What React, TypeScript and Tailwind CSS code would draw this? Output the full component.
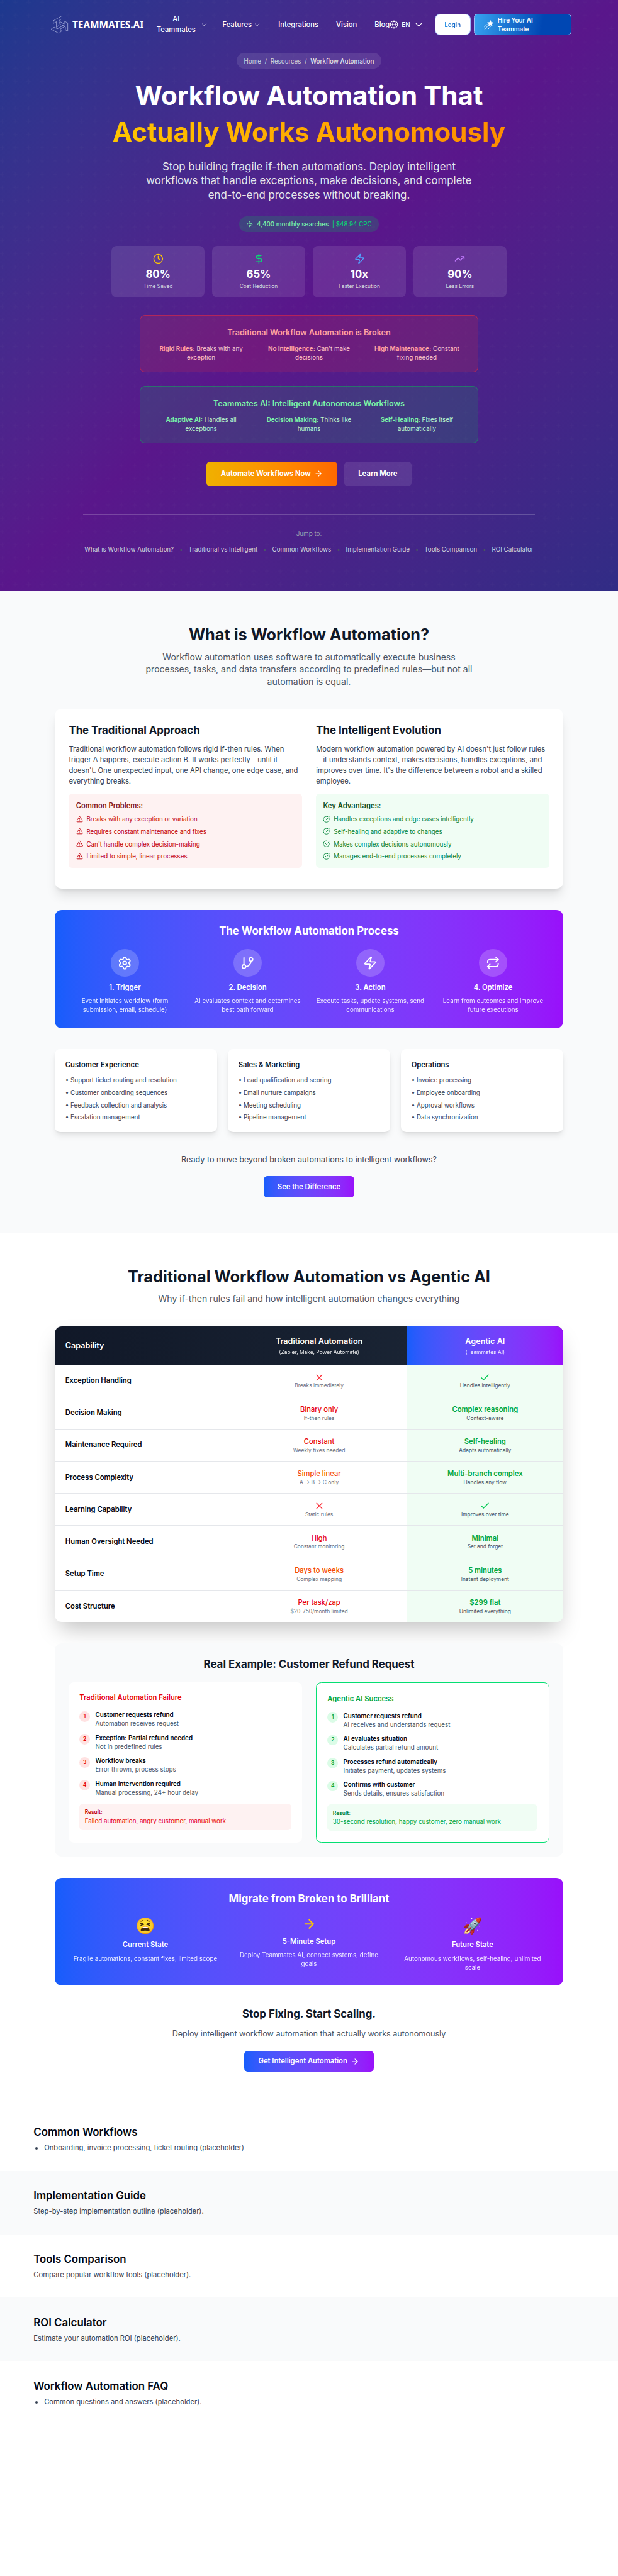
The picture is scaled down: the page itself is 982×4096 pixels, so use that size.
import { Fragment, type ReactNode } from "react";
import {
  AlertTriangle,
  ArrowRight,
  Check,
  ChevronDown,
  CircleCheckBig,
  Clock,
  DollarSign,
  GitBranch,
  Globe,
  Repeat,
  Settings,
  TrendingUp,
  X,
  Zap,
} from "lucide-react";

function LogoMark() {
  return (
    <svg width="40" height="42" viewBox="19 21 120 126" fill="none" stroke="#b4bbe4" strokeWidth="3.2" strokeLinejoin="round">
      <path d="M35 55 90 24Q94 23 94 28V42L73 54V86L56 100V62L38 72Q35 73 35 69Z" />
      <path d="M78 64Q78 60 82 62L109 78V62Q110 58 114 60L133 70V126L117 117V98L80 78Z" />
      <path d="M22 110 40 100Q43 99 46 101L62 110 104 86Q110 86 112 94L82 112 89 124Q90 128 86 131L72 141 22 114Z" />
    </svg>
  );
}

function ShootingStar() {
  return (
    <svg width="22" height="22" viewBox="0 0 22 22" fill="none" stroke="#fff" strokeWidth="1.300" strokeLinecap="round">
      <path fill="#fff" strokeWidth="0.800" strokeLinejoin="round" d="M14.500 .8l2 4.300 4.700.5-3.500 3.200 1 4.700-4.200-2.400-4.200 2.400 1-4.700L7.800 5.600l4.700-.5z" />
      <path d="M7 9.500.8 15.700M8 14l-6 6.500M14.500 15l-5 5.500" />
    </svg>
  );
}

function PlusPattern() {
  return (
    <svg className="absolute inset-0 h-full w-full opacity-10">
      <defs>
        <pattern id="plus" width="60" height="60" patternUnits="userSpaceOnUse">
          <path
            fill="#9C92AC"
            fillOpacity="0.4"
            d="M36 34v-4h-2v4h-4v2h4v4h2v-4h4v-2h-4zm0-30V0h-2v4h-4v2h4v4h2V6h4V4h-4zM6 34v-4H4v4H0v2h4v4h2v-4h4v-2H6zM6 4V0H4v4H0v2h4v4h2V6h4V4H6z"
          />
        </pattern>
      </defs>
      <rect width="100%" height="100%" fill="url(#plus)" />
    </svg>
  );
}

function Header() {
  return (
    <header className="flex h-[112px] items-center pl-[116px] font-medium">
      <LogoMark />
      <span className="ml-2 w-[184px] font-['Noto_Sans',sans-serif] text-[22px] font-bold tracking-[-0.1px]">TEAMMATES.AI</span>
      <nav className="flex w-[559px] items-center text-base whitespace-nowrap">
        <span className="ml-[4px] flex w-[119px] items-center">
          <span className="w-[94px] text-center leading-6">
            AI
            <br />
            Teammates
          </span>
          <ChevronDown size={16} className="ml-[9px]" />
        </span>
        <span className="ml-[33px] flex items-center gap-1">
          Features <ChevronDown size={16} />
        </span>
        <span className="ml-10">Integrations</span>
        <span className="ml-10">Vision</span>
        <span className="ml-10">Blog</span>
      </nav>
      <div className="ml-[-25px] flex items-center">
        <Globe size={20} strokeWidth={1.8} />
        <span className="ml-2 text-sm">EN</span>
        <ChevronDown size={24} strokeWidth={1.6} className="ml-2" />
      </div>
      <div className="ml-6 flex items-center gap-2">
        <span className="flex h-12 w-[81px] items-center justify-center rounded-xl border-2 border-[#9dc0fb] bg-white text-sm">
          <span className="bg-gradient-to-r from-[#2f95e6] to-[#0047b3] bg-clip-text text-transparent">Login</span>
        </span>
        <span className="flex h-12 w-[221px] items-center gap-[9px] rounded-lg border-2 border-[#9dc0fb] bg-[linear-gradient(100deg,#37a3f1_0%,#0047b3_70%)] pl-[21px] text-sm leading-5 font-semibold">
          <ShootingStar />
          <span className="w-24">Hire Your AI Teammate</span>
        </span>
      </div>
    </header>
  );
}

const stats = [
  { icon: <Clock size={24} className="text-yellow-400" />, value: "80%", label: "Time Saved" },
  { icon: <DollarSign size={24} className="text-green-400" />, value: "65%", label: "Cost Reduction" },
  { icon: <Zap size={24} className="text-blue-400" />, value: "10x", label: "Faster Execution" },
  { icon: <TrendingUp size={24} className="text-purple-400" />, value: "90%", label: "Less Errors" },
];

const jumpLinks = [
  "What is Workflow Automation?",
  "Traditional vs Intelligent",
  "Common Workflows",
  "Implementation Guide",
  "Tools Comparison",
  "ROI Calculator",
];

function Callout({ tone, title, items }: { tone: "red" | "green"; title: string; items: [string, string][] }) {
  const red = tone === "red";
  return (
    <div className={`mx-auto h-[130px] w-[768px] rounded-xl border p-6 text-center ${red ? "border-red-500/50 bg-red-500/15" : "border-green-500/40 bg-green-500/15"}`}>
      <h3 className={`mb-3 text-lg font-semibold ${red ? "text-red-300" : "text-green-300"}`}>{title}</h3>
      <div className={`grid grid-cols-3 gap-4 text-sm ${red ? "text-red-200" : "text-green-200"}`}>
        {items.map(([k, v]) => (
          <div key={k}>
            <strong className={red ? "text-red-300" : "text-green-300"}>{k}</strong> {v}
          </div>
        ))}
      </div>
    </div>
  );
}

function Hero() {
  return (
    <section className="relative h-[1339px] bg-gradient-to-br from-blue-900 via-purple-900 to-indigo-900 text-white">
      <PlusPattern />
      <div className="relative">
        <Header />
        <div className="flex flex-col items-center pt-2">
          <div className="flex h-9 items-center gap-2 rounded-full bg-white/10 px-4 text-sm text-gray-300">
            <span>Home</span>
            <span>/</span>
            <span>Resources</span>
            <span>/</span>
            <span className="font-medium text-gray-200">Workflow Automation</span>
          </div>
          <h1 className="mt-6 w-[1024px] text-center text-6xl leading-[75px] font-bold">
            Workflow Automation That
            <span className="mt-2 block bg-gradient-to-r from-yellow-400 to-orange-400 bg-clip-text text-transparent">Actually Works Autonomously</span>
          </h1>
          <p className="mt-6 w-[768px] text-center text-2xl text-gray-200">
            Stop building fragile if-then automations. Deploy intelligent workflows that handle exceptions, make decisions, and complete end-to-end processes without breaking.
          </p>
          <div className="mt-8 flex h-9 items-center rounded-full bg-green-500/20 px-4 text-sm">
            <Zap size={16} className="text-green-300" />
            <span className="ml-2 font-medium text-green-300">4,400 monthly searches</span>
            <span className="ml-2 text-green-400">| $48.94 CPC</span>
          </div>
          <div className="mt-8 grid w-[896px] grid-cols-4 gap-4">
            {stats.map((s) => (
              <div key={s.label} className="flex flex-col items-center rounded-xl bg-white/10 p-4">
                {s.icon}
                <div className="mt-2 text-2xl font-bold">{s.value}</div>
                <div className="mt-1 text-xs text-gray-300">{s.label}</div>
              </div>
            ))}
          </div>
          <div className="mt-10 flex flex-col gap-8">
            <Callout
              tone="red"
              title="Traditional Workflow Automation is Broken"
              items={[
                ["Rigid Rules:", "Breaks with any exception"],
                ["No Intelligence:", "Can't make decisions"],
                ["High Maintenance:", "Constant fixing needed"],
              ]}
            />
            <Callout
              tone="green"
              title="Teammates AI: Intelligent Autonomous Workflows"
              items={[
                ["Adaptive AI:", "Handles all exceptions"],
                ["Decision Making:", "Thinks like humans"],
                ["Self-Healing:", "Fixes itself automatically"],
              ]}
            />
          </div>
          <div className="mt-10 flex gap-4 font-bold">
            <span className="flex h-14 w-[296px] items-center justify-center gap-2 rounded-lg bg-gradient-to-r from-yellow-500 to-orange-500 whitespace-nowrap">
              Automate Workflows Now <ArrowRight size={20} />
            </span>
            <span className="flex h-14 w-[152px] items-center justify-center rounded-lg bg-white/10">Learn More</span>
          </div>
          <div className="mt-16 w-[1024px] border-t border-white/20 pt-8 text-center text-sm">
            <p className="mb-4 text-gray-400">Jump to:</p>
            <div className="flex justify-between px-[3.500px] whitespace-nowrap text-gray-300">
              {jumpLinks.map((l, i) => (
                <Fragment key={l}>
                  {i > 0 && <span className="text-gray-600">•</span>}
                  <span>{l}</span>
                </Fragment>
              ))}
            </div>
          </div>
        </div>
      </div>
    </section>
  );
}

function Points({ tone, title, items }: { tone: "red" | "green"; title: string; items: string[] }) {
  const red = tone === "red";
  return (
    <div className={`mt-4 rounded-lg p-4 ${red ? "bg-red-50" : "bg-green-50"}`}>
      <h4 className={`mb-2 font-semibold ${red ? "text-red-900" : "text-green-900"}`}>{title}</h4>
      <ul className={`space-y-2 text-sm ${red ? "text-red-700" : "text-green-700"}`}>
        {items.map((t) => (
          <li key={t} className="flex items-center gap-2">
            {red ? <AlertTriangle size={16} /> : <CircleCheckBig size={16} />}
            {t}
          </li>
        ))}
      </ul>
    </div>
  );
}

const process: { icon: ReactNode; title: string; text: string }[] = [
  { icon: <Settings size={32} />, title: "1. Trigger", text: "Event initiates workflow (form submission, email, schedule)" },
  { icon: <GitBranch size={32} />, title: "2. Decision", text: "AI evaluates context and determines best path forward" },
  { icon: <Zap size={32} />, title: "3. Action", text: "Execute tasks, update systems, send communications" },
  { icon: <Repeat size={32} />, title: "4. Optimize", text: "Learn from outcomes and improve future executions" },
];

const useCases = [
  { title: "Customer Experience", items: ["Support ticket routing and resolution", "Customer onboarding sequences", "Feedback collection and analysis", "Escalation management"] },
  { title: "Sales & Marketing", items: ["Lead qualification and scoring", "Email nurture campaigns", "Meeting scheduling", "Pipeline management"] },
  { title: "Operations", items: ["Invoice processing", "Employee onboarding", "Approval workflows", "Data synchronization"] },
];

function WhatIs() {
  return (
    <section className="bg-gray-50 px-[124px] py-20">
      <h2 className="text-center text-4xl font-bold text-gray-900">What is Workflow Automation?</h2>
      <p className="mx-auto mt-4 w-[768px] text-center text-xl text-gray-600">
        Workflow automation uses software to automatically execute business processes, tasks, and data transfers according to predefined rules—but not all automation is equal.
      </p>
      <div className="mt-12 grid grid-cols-2 gap-8 rounded-2xl bg-white p-8 pb-12 shadow-xl">
        <div>
          <h3 className="mb-4 text-2xl font-bold text-gray-900">The Traditional Approach</h3>
          <p className="text-gray-700">
            Traditional workflow automation follows rigid if-then rules. When trigger A happens, execute action B. It works perfectly—until it doesn't. One unexpected input, one API change, one edge case, and everything breaks.
          </p>
          <Points
            tone="red"
            title="Common Problems:"
            items={["Breaks with any exception or variation", "Requires constant maintenance and fixes", "Can't handle complex decision-making", "Limited to simple, linear processes"]}
          />
        </div>
        <div>
          <h3 className="mb-4 text-2xl font-bold text-gray-900">The Intelligent Evolution</h3>
          <p className="text-gray-700">
            Modern workflow automation powered by AI doesn't just follow rules—it understands context, makes decisions, handles exceptions, and improves over time. It's the difference between a robot and a skilled employee.
          </p>
          <Points
            tone="green"
            title="Key Advantages:"
            items={["Handles exceptions and edge cases intelligently", "Self-healing and adaptive to changes", "Makes complex decisions autonomously", "Manages end-to-end processes completely"]}
          />
        </div>
      </div>
      <div className="mt-12 rounded-2xl bg-gradient-to-r from-blue-600 to-purple-600 p-8 text-center text-white">
        <h3 className="mb-6 text-2xl font-bold">The Workflow Automation Process</h3>
        <div className="grid grid-cols-4 gap-6">
          {process.map((p) => (
            <div key={p.title}>
              <div className="mx-auto mb-3 flex size-16 items-center justify-center rounded-full bg-white/20">{p.icon}</div>
              <h4 className="mb-2 font-semibold">{p.title}</h4>
              <p className="text-sm opacity-90">{p.text}</p>
            </div>
          ))}
        </div>
      </div>
      <div className="mt-12 grid grid-cols-3 gap-6">
        {useCases.map((c) => (
          <div key={c.title} className="rounded-xl bg-white p-6 shadow-lg">
            <h4 className="mb-3 font-semibold text-gray-900">{c.title}</h4>
            <ul className="space-y-2 text-sm text-gray-700">
              {c.items.map((t) => (
                <li key={t}>• {t}</li>
              ))}
            </ul>
          </div>
        ))}
      </div>
      <div className="mt-12 flex flex-col items-center">
        <p className="text-lg text-gray-700">Ready to move beyond broken automations to intelligent workflows?</p>
        <span className="mt-6 flex h-12 w-[206px] items-center justify-center rounded-lg bg-gradient-to-r from-blue-600 to-purple-600 font-semibold text-white">See the Difference</span>
      </div>
    </section>
  );
}

type Row = { name: string; old?: string; oldTone?: "red" | "orange"; oldSub: string; ai?: string; aiSub: string };

const rows: Row[] = [
  { name: "Exception Handling", oldSub: "Breaks immediately", aiSub: "Handles intelligently" },
  { name: "Decision Making", old: "Binary only", oldSub: "If-then rules", ai: "Complex reasoning", aiSub: "Context-aware" },
  { name: "Maintenance Required", old: "Constant", oldSub: "Weekly fixes needed", ai: "Self-healing", aiSub: "Adapts automatically" },
  { name: "Process Complexity", old: "Simple linear", oldTone: "orange", oldSub: "A → B → C only", ai: "Multi-branch complex", aiSub: "Handles any flow" },
  { name: "Learning Capability", oldSub: "Static rules", aiSub: "Improves over time" },
  { name: "Human Oversight Needed", old: "High", oldSub: "Constant monitoring", ai: "Minimal", aiSub: "Set and forget" },
  { name: "Setup Time", old: "Days to weeks", oldTone: "orange", oldSub: "Complex mapping", ai: "5 minutes", aiSub: "Instant deployment" },
  { name: "Cost Structure", old: "Per task/zap", oldSub: "$20-750/month limited", ai: "$299 flat", aiSub: "Unlimited everything" },
];

function ComparisonTable() {
  return (
    <div className="mt-12 overflow-hidden rounded-2xl bg-white shadow-2xl">
      <div className="flex h-[88px] items-stretch bg-gradient-to-r from-gray-900 to-gray-800 text-center text-white">
        <div className="flex w-[400px] items-center px-6 text-lg font-semibold">Capability</div>
        <div className="w-[398px] py-5">
          <div className="text-lg font-semibold">Traditional Automation</div>
          <div className="mt-1 text-xs opacity-90">(Zapier, Make, Power Automate)</div>
        </div>
        <div className="w-[354px] bg-gradient-to-r from-blue-600 to-purple-600 py-5">
          <div className="text-lg font-semibold">Agentic AI</div>
          <div className="mt-1 text-xs opacity-90">(Teammates AI)</div>
        </div>
      </div>
      <div>
        {rows.map((r) => (
          <div key={r.name} className="flex h-[73px] items-stretch border-b border-gray-200 text-center last:h-[72px] last:border-b-0">
            <div className="flex w-[400px] items-center px-6 font-semibold text-gray-950">{r.name}</div>
            <div className="flex w-[398px] flex-col items-center pt-4">
              {r.old ? <div className={`font-medium ${r.oldTone === "orange" ? "text-orange-600" : "text-red-600"}`}>{r.old}</div> : <X size={24} className="text-red-500" />}
              <div className="text-xs text-gray-500">{r.oldSub}</div>
            </div>
            <div className="flex w-[354px] flex-col items-center bg-green-50 pt-4">
              {r.ai ? <div className="font-semibold text-green-600">{r.ai}</div> : <Check size={24} className="text-green-500" />}
              <div className="text-xs text-gray-600">{r.aiSub}</div>
            </div>
          </div>
        ))}
      </div>
    </div>
  );
}

function Steps({ tone, title, steps, result }: { tone: "red" | "green"; title: string; steps: [string, string][]; result: string }) {
  const red = tone === "red";
  return (
    <div className={`h-[364px] rounded-xl bg-white ${red ? "p-6" : "border-2 border-green-400 p-[24.500px]"}`}>
      <h4 className={`mb-4 font-semibold ${red ? "text-red-600" : "text-green-600"}`}>{title}</h4>
      <div className="space-y-3 text-sm">
        {steps.map(([a, b], i) => (
          <div key={a} className="flex items-start gap-3">
            <span className={`mt-0.5 flex size-6 items-center justify-center rounded-full text-xs font-semibold ${red ? "bg-red-100 text-red-600" : "bg-green-100 text-green-600"}`}>{i + 1}</span>
            <div>
              <div className="font-semibold text-gray-950">{a}</div>
              <div className="text-gray-600">{b}</div>
            </div>
          </div>
        ))}
      </div>
      <div className={`mt-4 rounded-lg p-3 ${red ? "bg-red-50" : "bg-green-50"}`}>
        <div className={`text-xs font-semibold ${red ? "text-red-700" : "text-green-700"}`}>Result:</div>
        <div className={`text-sm ${red ? "text-red-600" : "text-green-600"}`}>{result}</div>
      </div>
    </div>
  );
}

function Versus() {
  return (
    <section className="bg-white px-[124px] py-20">
      <h2 className="text-center text-4xl font-bold text-gray-900">Traditional Workflow Automation vs Agentic AI</h2>
      <p className="mt-4 text-center text-xl text-gray-600">Why if-then rules fail and how intelligent automation changes everything</p>
      <ComparisonTable />
      <div className="mt-12 rounded-2xl bg-gray-50 p-8">
        <h3 className="mb-6 text-center text-2xl font-bold text-gray-900">Real Example: Customer Refund Request</h3>
        <div className="grid grid-cols-2 gap-8">
          <Steps
            tone="red"
            title="Traditional Automation Failure"
            steps={[
              ["Customer requests refund", "Automation receives request"],
              ["Exception: Partial refund needed", "Not in predefined rules"],
              ["Workflow breaks", "Error thrown, process stops"],
              ["Human intervention required", "Manual processing, 24+ hour delay"],
            ]}
            result="Failed automation, angry customer, manual work"
          />
          <Steps
            tone="green"
            title="Agentic AI Success"
            steps={[
              ["Customer requests refund", "AI receives and understands request"],
              ["AI evaluates situation", "Calculates partial refund amount"],
              ["Processes refund automatically", "Initiates payment, updates systems"],
              ["Confirms with customer", "Sends details, ensures satisfaction"],
            ]}
            result="30-second resolution, happy customer, zero manual work"
          />
        </div>
      </div>
      <div className="mt-12 rounded-2xl bg-gradient-to-r from-blue-600 to-purple-600 p-8 text-center text-white">
        <h3 className="mb-6 text-2xl font-bold">Migrate from Broken to Brilliant</h3>
        <div className="grid grid-cols-3 gap-6">
          <div>
            <div className="mb-3 h-10 text-4xl">😫</div>
            <h4 className="mb-2 font-semibold">Current State</h4>
            <p className="text-sm opacity-90">Fragile automations, constant fixes, limited scope</p>
          </div>
          <div>
            <ArrowRight size={32} className="mx-auto mb-3 text-yellow-400" />
            <h4 className="mb-2 font-semibold">5-Minute Setup</h4>
            <p className="text-sm opacity-90">Deploy Teammates AI, connect systems, define goals</p>
          </div>
          <div>
            <div className="mb-3 h-10 text-4xl">🚀</div>
            <h4 className="mb-2 font-semibold">Future State</h4>
            <p className="text-sm opacity-90">Autonomous workflows, self-healing, unlimited scale</p>
          </div>
        </div>
      </div>
      <div className="mt-12 flex flex-col items-center">
        <h3 className="text-2xl font-bold text-gray-900">Stop Fixing. Start Scaling.</h3>
        <p className="mt-4 text-lg text-gray-600">Deploy intelligent workflow automation that actually works autonomously</p>
        <span className="mt-6 flex h-12 w-[295px] items-center justify-center gap-2 rounded-lg bg-gradient-to-r from-blue-600 to-purple-600 font-semibold whitespace-nowrap text-white">
          Get Intelligent Automation <ArrowRight size={20} />
        </span>
      </div>
    </section>
  );
}

const outline = [
  { title: "Common Workflows", text: "Onboarding, invoice processing, ticket routing (placeholder)", list: true },
  { title: "Implementation Guide", text: "Step-by-step implementation outline (placeholder).", list: false },
  { title: "Tools Comparison", text: "Compare popular workflow tools (placeholder).", list: false },
  { title: "ROI Calculator", text: "Estimate your automation ROI (placeholder).", list: false },
  { title: "Workflow Automation FAQ", text: "Common questions and answers (placeholder).", list: true },
];

export default function App() {
  return (
    <div className="h-[4096px] overflow-hidden bg-white">
      <div className="w-[1400px] bg-white font-['Inter',sans-serif] text-base text-gray-950 [zoom:0.7014]">
        <Hero />
        <WhatIs />
        <Versus />
        {outline.map((o, i) => (
          <section key={o.title} className={`px-[76px] py-10 ${i % 2 ? "bg-gray-50" : "bg-white"}`}>
            <h2 className="mb-2 text-2xl font-semibold">{o.title}</h2>
            {o.list ? (
              <ul className="list-disc pl-6 text-gray-700">
                <li>{o.text}</li>
              </ul>
            ) : (
              <p className="text-gray-700">{o.text}</p>
            )}
          </section>
        ))}
      </div>
    </div>
  );
}
